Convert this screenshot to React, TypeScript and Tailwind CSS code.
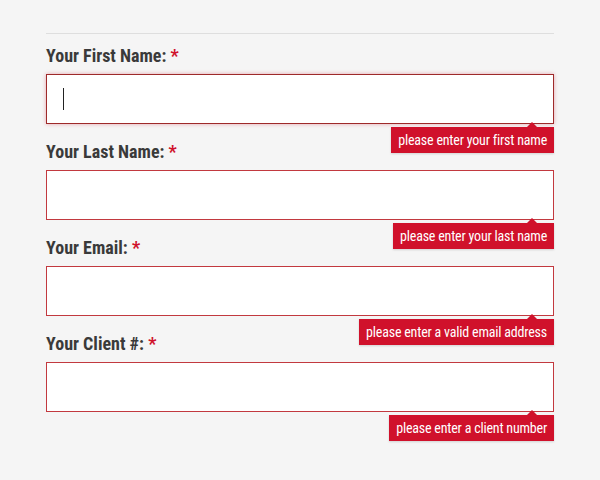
const FIELDS = [
  { label: 'Your First Name:', error: 'please enter your first name', focused: true },
  { label: 'Your Last Name:', error: 'please enter your last name' },
  { label: 'Your Email:', error: 'please enter a valid email address' },
  { label: 'Your Client #:', error: 'please enter a client number' },
];

const font = { fontFamily: '"Roboto Condensed", Roboto, "Liberation Sans", sans-serif' };

function Field({ label, error, focused }: { label: string; error: string; focused?: boolean }) {
  return (
    <div className="relative">
      <label className="block h-[40px] pt-[11px] text-[18px] leading-[22px] font-bold text-[#3a3a3a]">
        {label} <span className="text-[#d0112b]">*</span>
      </label>
      <div
        className={
          'h-[50px] bg-white border px-4 flex items-center ' +
          (focused
            ? 'border-[#9e2a2a] shadow-[0_0_4px_rgba(208,17,43,0.35)]'
            : 'border-[#c2393f]')
        }
      >
        {focused && <span className="block w-px h-[22px] bg-[#222]" />}
      </div>
      <div className="absolute right-0 top-[93px] z-10">
        <div className="absolute -top-[5px] right-[17px] w-0 h-0 border-x-[5px] border-x-transparent border-b-[5px] border-b-[#d0112b]" />
        <div className="bg-[#d0112b] text-white text-[14px] leading-[26px] px-[7px] tracking-[-0.2px] whitespace-nowrap shadow-[0_1px_2px_rgba(0,0,0,0.15)]">
          {error}
        </div>
      </div>
    </div>
  );
}

export default function App() {
  return (
    <div className="min-h-[480px] bg-[#f5f5f5] px-[46px] pt-[33px]" style={font}>
      <div className="border-t border-[#dedede]" />
      <div className="flex flex-col gap-[6px]">
        {FIELDS.map((f) => (
          <Field key={f.label} {...f} />
        ))}
      </div>
    </div>
  );
}
